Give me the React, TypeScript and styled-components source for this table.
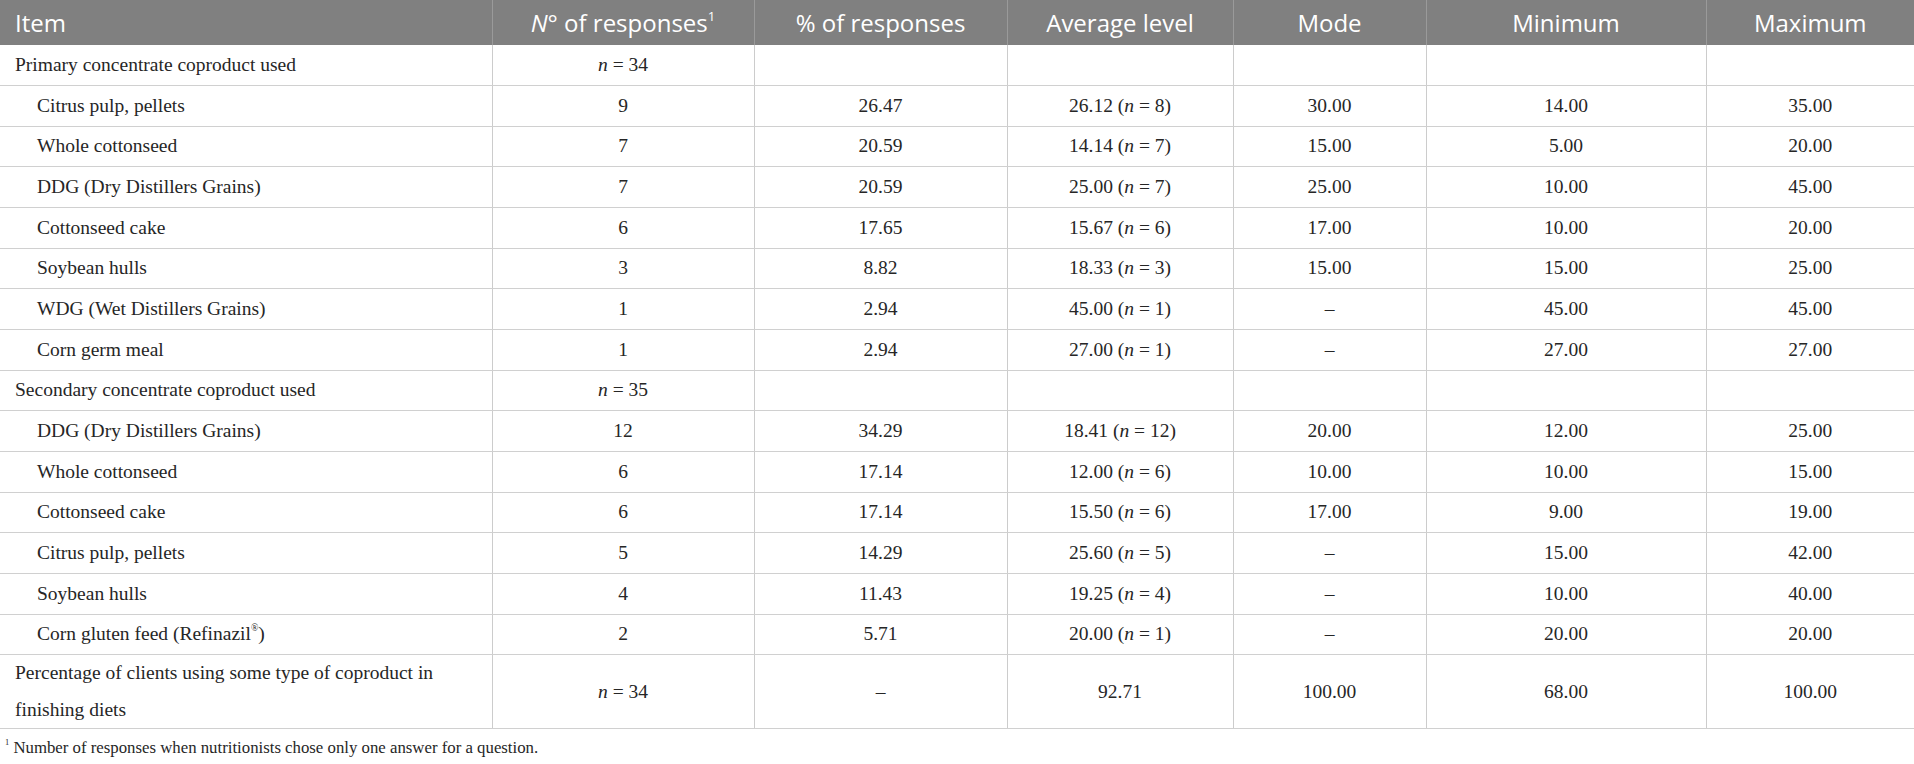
import React from 'react';
import styled, { createGlobalStyle } from 'styled-components';

const GlobalStyle = createGlobalStyle`
  html, body {
    margin: 0;
    padding: 0;
    background: #ffffff;
  }
`;

const Page = styled.div`
  width: 1914px;
  background: #ffffff;
`;

const Table = styled.table`
  width: 100%;
  border-collapse: collapse;
  table-layout: fixed;
  font-family: 'Liberation Serif', 'Times New Roman', serif;
  font-size: 19.5px;
  color: #262626;
`;

const HeadRow = styled.tr`
  height: 45px;
  background: #808080;
`;

const HeadCell = styled.th<{ $align?: 'left' | 'center' }>`
  font-family: 'Open Sans', 'DejaVu Sans', sans-serif;
  font-weight: 400;
  font-size: 24px;
  color: #ffffff;
  text-align: ${(p) => p.$align || 'center'};
  padding: 0 15px;
  border-left: 1px solid #9a9a9a;
  white-space: nowrap;
  &:first-child {
    border-left: none;
  }
`;

const Row = styled.tr<{ $tall?: boolean }>`
  height: ${(p) => (p.$tall ? '73px' : '40.67px')};
`;

const Cell = styled.td<{ $indent?: boolean; $align?: 'left' | 'center' }>`
  text-align: ${(p) => p.$align || 'center'};
  padding: 0 15px 0 ${(p) => (p.$indent ? '37px' : '15px')};
  border-left: 1px solid #cccccc;
  border-bottom: 1px solid #d0d0d0;
  line-height: 36.5px;
  vertical-align: middle;
  &:first-child {
    border-left: none;
  }
`;

const Ital = styled.i`
  font-style: italic;
`;

const Sup = styled.sup`
  font-size: 0.5em;
  vertical-align: 0.9em;
  line-height: 0;
`;

const HeadSup = styled.sup`
  font-size: 0.55em;
  vertical-align: 0.8em;
  line-height: 0;
`;

const Footnote = styled.div`
  font-family: 'Liberation Serif', 'Times New Roman', serif;
  font-size: 16.8px;
  color: #262626;
  padding: 9px 0 0 5px;
`;

type Stat = {
  item: string;
  count: string;
  pct: string;
  avg: string;
  n?: number;
  mode: string;
  min: string;
  max: string;
};

const primary: Stat[] = [
  { item: 'Citrus pulp, pellets', count: '9', pct: '26.47', avg: '26.12', n: 8, mode: '30.00', min: '14.00', max: '35.00' },
  { item: 'Whole cottonseed', count: '7', pct: '20.59', avg: '14.14', n: 7, mode: '15.00', min: '5.00', max: '20.00' },
  { item: 'DDG (Dry Distillers Grains)', count: '7', pct: '20.59', avg: '25.00', n: 7, mode: '25.00', min: '10.00', max: '45.00' },
  { item: 'Cottonseed cake', count: '6', pct: '17.65', avg: '15.67', n: 6, mode: '17.00', min: '10.00', max: '20.00' },
  { item: 'Soybean hulls', count: '3', pct: '8.82', avg: '18.33', n: 3, mode: '15.00', min: '15.00', max: '25.00' },
  { item: 'WDG (Wet Distillers Grains)', count: '1', pct: '2.94', avg: '45.00', n: 1, mode: '–', min: '45.00', max: '45.00' },
  { item: 'Corn germ meal', count: '1', pct: '2.94', avg: '27.00', n: 1, mode: '–', min: '27.00', max: '27.00' },
];

const secondary: Stat[] = [
  { item: 'DDG (Dry Distillers Grains)', count: '12', pct: '34.29', avg: '18.41', n: 12, mode: '20.00', min: '12.00', max: '25.00' },
  { item: 'Whole cottonseed', count: '6', pct: '17.14', avg: '12.00', n: 6, mode: '10.00', min: '10.00', max: '15.00' },
  { item: 'Cottonseed cake', count: '6', pct: '17.14', avg: '15.50', n: 6, mode: '17.00', min: '9.00', max: '19.00' },
  { item: 'Citrus pulp, pellets', count: '5', pct: '14.29', avg: '25.60', n: 5, mode: '–', min: '15.00', max: '42.00' },
  { item: 'Soybean hulls', count: '4', pct: '11.43', avg: '19.25', n: 4, mode: '–', min: '10.00', max: '40.00' },
  { item: 'Corn gluten feed (Refinazil®)', count: '2', pct: '5.71', avg: '20.00', n: 1, mode: '–', min: '20.00', max: '20.00' },
];

const ItemLabel = ({ text }: { text: string }) => {
  if (text.endsWith('®)')) {
    return (
      <>
        {text.slice(0, -2)}
        <Sup>®</Sup>)
      </>
    );
  }
  return <>{text}</>;
};

const StatRow = ({ s }: { s: Stat }) => (
  <Row>
    <Cell $align="left" $indent>
      <ItemLabel text={s.item} />
    </Cell>
    <Cell>{s.count}</Cell>
    <Cell>{s.pct}</Cell>
    <Cell>
      {s.avg} (<Ital>n</Ital> = {s.n})
    </Cell>
    <Cell>{s.mode}</Cell>
    <Cell>{s.min}</Cell>
    <Cell>{s.max}</Cell>
  </Row>
);

const GroupRow = ({ title, n }: { title: string; n: number }) => (
  <Row>
    <Cell $align="left">{title}</Cell>
    <Cell>
      <Ital>n</Ital> = {n}
    </Cell>
    <Cell />
    <Cell />
    <Cell />
    <Cell />
    <Cell />
  </Row>
);

const App = () => {
  return (
    <Page>
      <GlobalStyle />
      <Table>
        <colgroup>
          <col style={{ width: 492 }} />
          <col style={{ width: 262 }} />
          <col style={{ width: 253 }} />
          <col style={{ width: 226 }} />
          <col style={{ width: 193 }} />
          <col style={{ width: 280 }} />
          <col />
        </colgroup>
        <thead>
          <HeadRow>
            <HeadCell $align="left">Item</HeadCell>
            <HeadCell>
              <Ital>N</Ital>° of responses<HeadSup>1</HeadSup>
            </HeadCell>
            <HeadCell>% of responses</HeadCell>
            <HeadCell>Average level</HeadCell>
            <HeadCell>Mode</HeadCell>
            <HeadCell>Minimum</HeadCell>
            <HeadCell>Maximum</HeadCell>
          </HeadRow>
        </thead>
        <tbody>
          <GroupRow title="Primary concentrate coproduct used" n={34} />
          {primary.map((s) => (
            <StatRow key={'p' + s.item} s={s} />
          ))}
          <GroupRow title="Secondary concentrate coproduct used" n={35} />
          {secondary.map((s) => (
            <StatRow key={'s' + s.item} s={s} />
          ))}
          <Row $tall>
            <Cell $align="left">
              Percentage of clients using some type of coproduct in
              <br />
              finishing diets
            </Cell>
            <Cell>
              <Ital>n</Ital> = 34
            </Cell>
            <Cell>–</Cell>
            <Cell>92.71</Cell>
            <Cell>100.00</Cell>
            <Cell>68.00</Cell>
            <Cell>100.00</Cell>
          </Row>
        </tbody>
      </Table>
      <Footnote>
        <Sup>1</Sup> Number of responses when nutritionists chose only one answer for a question.
      </Footnote>
    </Page>
  );
};

export default App;
